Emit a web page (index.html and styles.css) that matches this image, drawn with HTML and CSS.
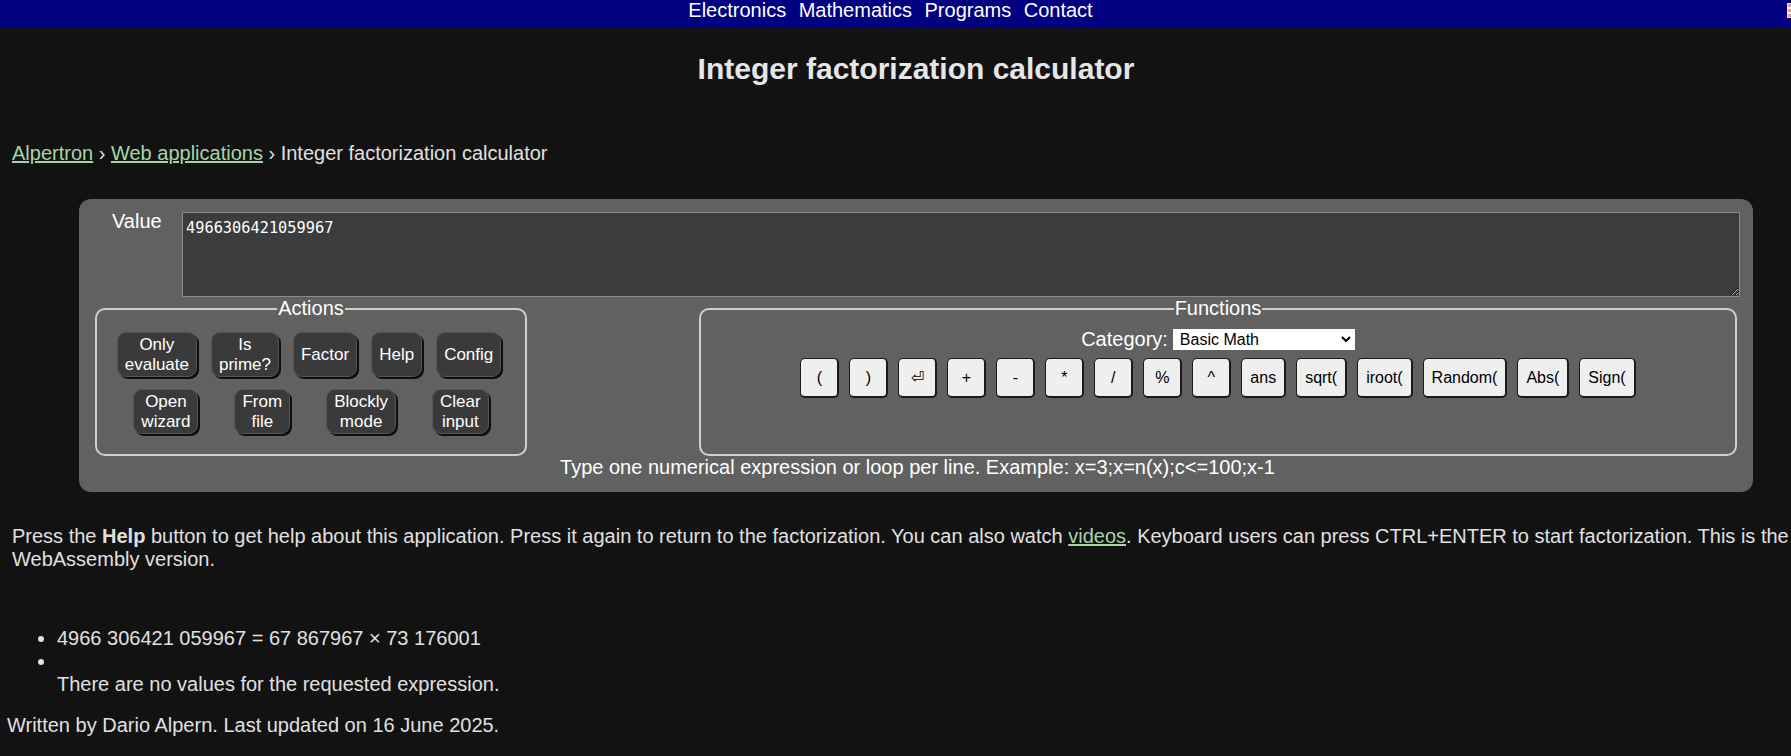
FILE: index.html
```html
<!DOCTYPE html>
<html lang="en">
<head>
<meta charset="utf-8">
<title>Integer factorization calculator</title>
<link rel="stylesheet" href="styles.css">
</head>
<body>
<div class="page">
  <header class="topbar">
    <nav class="topnav">
      <a href="#">Electronics</a>
      <a href="#">Mathematics</a>
      <a href="#">Programs</a>
      <a href="#">Contact</a>
    </nav>
    <span class="flag"></span>
  </header>

  <h1 class="title">Integer factorization calculator</h1>

  <div class="breadcrumb"><a href="#">Alpertron</a> › <a href="#">Web applications</a> › Integer factorization calculator</div>

  <div class="panel">
    <div class="value-row">
      <label class="value-label" for="value">Value</label>
      <textarea id="value" class="value-input">4966306421059967</textarea>
    </div>
    <div class="groups">
      <fieldset class="group actions">
        <legend>Actions</legend>
        <div class="action-row row-one">
          <button class="act">Only<br>evaluate</button>
          <button class="act">Is<br>prime?</button>
          <button class="act">Factor</button>
          <button class="act">Help</button>
          <button class="act">Config</button>
        </div>
        <div class="action-row row-two">
          <button class="act">Open<br>wizard</button>
          <button class="act">From<br>file</button>
          <button class="act">Blockly<br>mode</button>
          <button class="act">Clear<br>input</button>
        </div>
      </fieldset>
      <fieldset class="group functions">
        <legend>Functions</legend>
        <div class="category-row">
          <label for="cat">Category:</label>
          <select id="cat" class="cat-select"><option>Basic Math</option></select>
        </div>
        <div class="func-row">
          <button class="fn">(</button>
          <button class="fn">)</button>
          <button class="fn">⏎</button>
          <button class="fn">+</button>
          <button class="fn">-</button>
          <button class="fn">*</button>
          <button class="fn">/</button>
          <button class="fn">%</button>
          <button class="fn">^</button>
          <button class="fn">ans</button>
          <button class="fn">sqrt(</button>
          <button class="fn">iroot(</button>
          <button class="fn">Random(</button>
          <button class="fn">Abs(</button>
          <button class="fn">Sign(</button>
        </div>
      </fieldset>
    </div>
    <div class="hint">Type one numerical expression or loop per line. Example: x=3;x=n(x);c&lt;=100;x-1</div>
  </div>

  <p class="intro">Press the <b>Help</b> button to get help about this application. Press it again to return to the factorization. You can also watch <a href="#">videos</a>. Keyboard users can press CTRL+ENTER to start factorization. This is the WebAssembly version.</p>

  <ul class="results">
    <li>4966 306421 059967 = 67 867967 × 73 176001</li>
    <li><br>There are no values for the requested expression.</li>
  </ul>

  <div class="footer">Written by Dario Alpern. Last updated on 16 June 2025.</div>
</div>
</body>
</html>
```
FILE: styles.css
```css
html, body {
  margin: 0;
  padding: 0;
  background: #121212;
  overflow: hidden;
}

.page {
  width: 1832px;
  font-family: "Liberation Sans", Arial, sans-serif;
  font-size: 20px;
  line-height: 23px;
  color: #e0e0e0;
}

a {
  color: #a5d6a7;
}

.topbar {
  position: relative;
  width: 1791px;
  height: 27px;
  background: #000080;
  overflow: hidden;
  display: flex;
  justify-content: center;
}

.topnav {
  display: flex;
  gap: 12.5px;
  padding-right: 10px;
  line-height: 21px;
}

.topnav a {
  color: #ffffff;
  text-decoration: none;
}

.flag {
  position: absolute;
  left: 1787px;
  top: 3px;
  width: 18px;
  height: 13px;
  border: 1px solid #e8e8e8;
  background: repeating-linear-gradient(180deg, #e8a080 0 3px, #ffffff 3px 5px);
}

.title {
  margin: 24px 0 0;
  font-size: 30px;
  line-height: 35px;
  font-weight: bold;
  text-align: center;
  color: #e6e6e6;
}

.breadcrumb {
  margin: 56px 0 0;
  padding-left: 12px;
}

.panel {
  margin: 34px 79px 0;
  padding: 13px 13px 13px 16px;
  background: #616161;
  border-radius: 12px;
}

.value-row {
  display: flex;
  align-items: flex-start;
}

.value-label {
  width: 70px;
  padding-left: 17px;
  margin-top: -2px;
  color: #ffffff;
}

.value-input {
  flex: 1;
  height: 85px;
  box-sizing: border-box;
  margin: 0;
  padding: 6px 3px 2px;
  background: #3c3c3c;
  border: 1px solid #8a8a8a;
  color: #ffffff;
  font-family: "DejaVu Sans Mono", "Liberation Mono", monospace;
  font-size: 15.3px;
}

.groups {
  display: flex;
  justify-content: space-between;
  padding-right: 3px;
}

.group {
  margin: 0;
  border: 2px solid #d0d0d0;
  border-radius: 10px;
  min-width: 0;
}

.group legend {
  margin: 0 auto;
  padding: 0 1px;
  color: #ffffff;
  line-height: 23px;
}

.actions {
  width: 432px;
  box-sizing: border-box;
  padding: 12px 8px 19.5px;
}

.functions {
  width: 1038px;
  box-sizing: border-box;
  padding: 8px 8px 17px;
}

.action-row {
  display: flex;
  justify-content: center;
}

.row-one {
  gap: 14px;
  margin-left: -4px;
}

.row-two {
  gap: 36px;
  margin-top: 12px;
}

.act {
  height: 45px;
  box-sizing: border-box;
  padding: 2px 7px;
  font-family: "Liberation Sans", Arial, sans-serif;
  font-size: 17px;
  line-height: 19.5px;
  color: #ffffff;
  background: #3a3a3a;
  border: 1px solid #555555;
  border-radius: 9px;
  box-shadow: 2px 2px 0 #0e0e0e;
}

.category-row {
  display: flex;
  justify-content: center;
  align-items: center;
  gap: 5px;
  color: #ffffff;
}

.cat-select {
  width: 182px;
  height: 21px;
  font-family: "Liberation Sans", Arial, sans-serif;
  font-size: 16px;
  background: #ffffff;
  color: #000000;
  border: 1px solid #ffffff;
  padding: 0 2px;
}

.func-row {
  display: flex;
  justify-content: center;
  gap: 10px;
  margin-top: 7px;
}

.fn {
  min-width: 39px;
  height: 40px;
  box-sizing: border-box;
  padding: 0 8px;
  font-family: "Liberation Sans", Arial, sans-serif;
  font-size: 16px;
  color: #000000;
  background: #efefef;
  border-style: solid;
  border-color: #1a1a1a;
  border-width: 1px 2px 2px 1px;
  border-radius: 5px;
}

.hint {
  text-align: center;
  color: #ffffff;
}

.intro {
  margin: 33px 12px 0;
}

.results {
  margin: 56px 0 0 12px;
  padding-left: 45px;
}

.footer {
  margin-top: 18px;
  padding-left: 7px;
}
```
